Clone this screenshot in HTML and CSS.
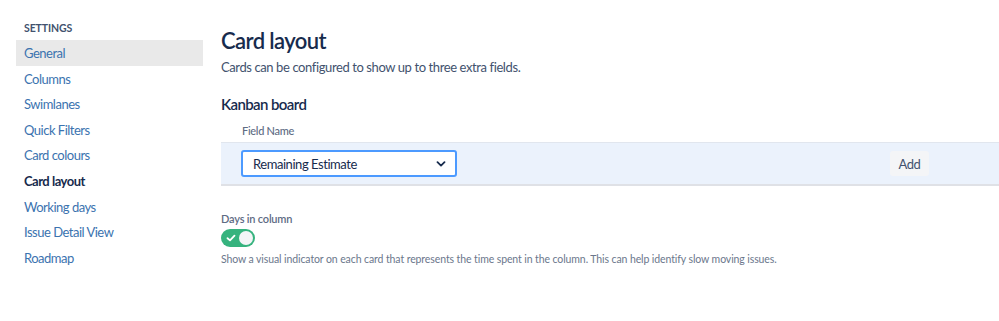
FILE: index.html
```html
<html>
  <head>
    <title>Card layout</title>
    <meta name="viewport" content="width=device-width, initial-scale=1.0">
    <link rel="stylesheet" href="styles.css">
  </head>
  <body>
    <div class="page">
      <nav class="sidebar">
        <h4 class="sidebar__title">Settings</h4>
        <a class="sidebar__item sidebar__item--hover" href="#">General</a>
        <a class="sidebar__item" href="#">Columns</a>
        <a class="sidebar__item" href="#">Swimlanes</a>
        <a class="sidebar__item" href="#">Quick Filters</a>
        <a class="sidebar__item" href="#">Card colours</a>
        <a class="sidebar__item sidebar__item--active" href="#">Card layout</a>
        <a class="sidebar__item" href="#">Working days</a>
        <a class="sidebar__item" href="#">Issue Detail View</a>
        <a class="sidebar__item" href="#">Roadmap</a>
      </nav>

      <main class="content">
        <h1>Card layout</h1>
        <p class="intro">Cards can be configured to show up to three extra fields.</p>

        <h2>Kanban board</h2>
        <div class="fields">
          <div class="fields__head">Field Name</div>
          <div class="fields__row">
            <div class="select">
              <span>Remaining Estimate</span>
              <svg width="10" height="6" viewBox="0 0 10 6">
                <path d="M1.5 1.2 L5 4.6 L8.5 1.2" fill="none" stroke="#172b4d" stroke-width="1.8" stroke-linecap="round" stroke-linejoin="round"/>
              </svg>
            </div>
            <button class="add">Add</button>
          </div>
        </div>

        <div class="option">
          <label class="option__label">Days in column</label>
          <div class="toggle">
            <svg class="toggle__check" width="10" height="8" viewBox="0 0 10 8">
              <path d="M1.5 4.2 L4 6.4 L8.5 1.6" fill="none" stroke="white" stroke-width="1.8" stroke-linecap="round" stroke-linejoin="round"/>
            </svg>
            <span class="toggle__knob"></span>
          </div>
          <p class="option__help">Show a visual indicator on each card that represents the time spent in the column. This can help identify slow moving issues.</p>
        </div>
      </main>
    </div>
  </body>
</html>
```

FILE: styles.css
```css
body {
  margin: 0;
  font-family: Lato, "Noto Sans", Arial, sans-serif;
  color: #172b4d;
  background: white;
  overflow: hidden;
}

.page {
  display: flex;
}

.sidebar {
  width: 187px;
  margin-left: 16px;
  padding-top: 21px;
  display: flex;
  flex-direction: column;
}

.sidebar__title {
  margin: 0 0 5px 8px;
  font-size: 10.5px;
  line-height: 14px;
  font-weight: 700;
  text-transform: uppercase;
  color: #42526e;
  letter-spacing: -0.1px;
}

.sidebar__item {
  display: block;
  height: 25.6px;
  line-height: 26px;
  padding-left: 8px;
  font-size: 13px;
  letter-spacing: -0.5px;
  color: #3b73af;
  text-decoration: none;
}

.sidebar__item--hover {
  background: #e9e9e9;
}

.sidebar__item--active {
  color: #172b4d;
  font-weight: 700;
}

.content {
  flex: 1;
  margin-left: 18px;
  padding-top: 27px;
}

h1 {
  margin: 0;
  font-size: 22px;
  letter-spacing: -0.6px;
  line-height: 28px;
  font-weight: 600;
  color: #172b4d;
}

.intro {
  margin: 2px 0 0;
  font-size: 13px;
  letter-spacing: -0.4px;
  line-height: 20px;
  color: #42526e;
}

h2 {
  margin: 17px 0 0;
  font-size: 15px;
  letter-spacing: -0.6px;
  line-height: 20px;
  font-weight: 600;
  color: #172b4d;
}

.fields {
  margin-top: 9px;
}

.fields__head {
  padding-left: 21px;
  font-size: 11px;
  letter-spacing: -0.3px;
  line-height: 16px;
  color: #5e6c84;
  font-weight: 500;
  margin-bottom: 3px;
}

.fields__row {
  display: flex;
  align-items: center;
  height: 41px;
  padding-left: 20px;
  background: #ebf2fc;
  border-top: 1px solid #e1e6ee;
  border-bottom: 2px solid #dfe1e6;
}

.select {
  box-sizing: border-box;
  width: 216px;
  height: 27px;
  padding: 0 9px 0 10px;
  display: flex;
  align-items: center;
  justify-content: space-between;
  background: white;
  border: 2px solid #4c9aff;
  border-radius: 3px;
  font-size: 13px;
  letter-spacing: -0.45px;
  color: #172b4d;
}

.add {
  margin-left: 433px;
  width: 39px;
  height: 25px;
  border: none;
  border-radius: 3px;
  background: #f4f5f7;
  color: #42526e;
  font-family: inherit;
  font-size: 13px;
  letter-spacing: -0.4px;
  padding: 0;
}

.option {
  margin-top: 25px;
}

.option__label {
  display: block;
  font-size: 11px;
  letter-spacing: -0.2px;
  line-height: 16px;
  font-weight: 600;
  color: #5e6c84;
}

.toggle {
  margin-top: 2px;
  position: relative;
  box-sizing: border-box;
  width: 34px;
  height: 18px;
  border-radius: 9px;
  background: #36b37e;
  display: flex;
  align-items: center;
  justify-content: space-between;
  padding: 0 2px 0 5px;
}

.toggle__knob {
  width: 14px;
  height: 14px;
  border-radius: 50%;
  background: #f4f5f7;
}

.option__help {
  margin: 4px 0 0;
  font-size: 10.5px;
  letter-spacing: -0.1px;
  line-height: 16px;
  color: #6b778c;
}
```
